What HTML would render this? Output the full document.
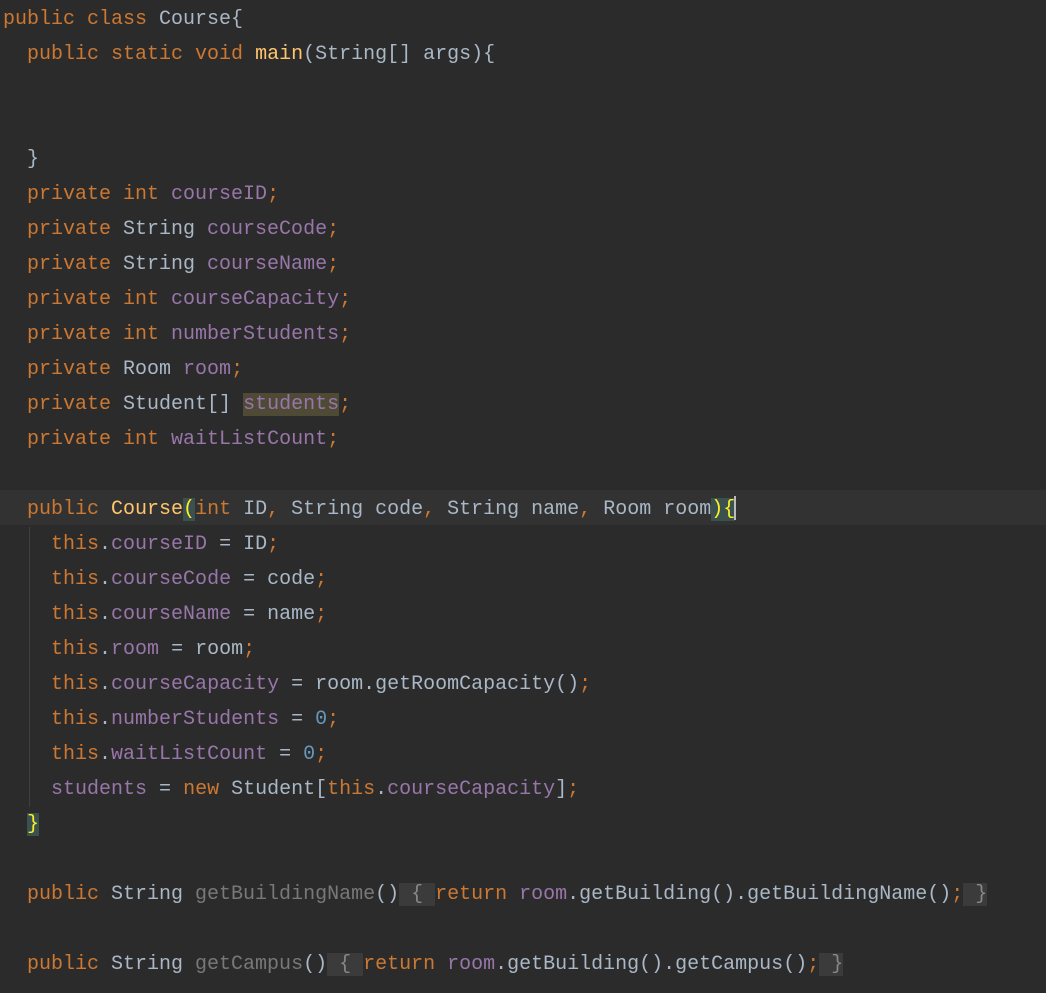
<!DOCTYPE html>
<html><head><style>
html,body{margin:0;padding:0;background:#2b2b2b;}
body{width:1046px;height:993px;overflow:hidden;position:relative;}
.c{position:absolute;left:3px;top:2px;font-family:"Liberation Mono",monospace;font-size:20px;line-height:35px;color:#a9b7c6;white-space:pre;}
.k{color:#cc7832}.f{color:#9876aa}.m{color:#ffc66d}.n{color:#6897bb}.g{color:#787878}
.fold{background:#3b3b3b;color:#888}
.bm{background:#3b514d;color:#ffef28}
.hl{background:#4e4a36}
.cur{position:absolute;left:0;top:490px;width:1046px;height:35px;background:#323232}
.guide{position:absolute;left:29px;top:527px;width:1px;height:280px;background:#3f3f3f}
.caret{position:absolute;left:734px;top:496px;width:2px;height:24px;background:#bbbbbb}
</style></head><body>
<div class="cur"></div>
<div class="guide"></div>
<div class="c"><span class="k">public class </span>Course{
  <span class="k">public static void </span><span class="m">main</span>(String[] args){


  }
  <span class="k">private int </span><span class="f">courseID</span><span class="k">;</span>
  <span class="k">private </span>String <span class="f">courseCode</span><span class="k">;</span>
  <span class="k">private </span>String <span class="f">courseName</span><span class="k">;</span>
  <span class="k">private int </span><span class="f">courseCapacity</span><span class="k">;</span>
  <span class="k">private int </span><span class="f">numberStudents</span><span class="k">;</span>
  <span class="k">private </span>Room <span class="f">room</span><span class="k">;</span>
  <span class="k">private </span>Student[] <span class="f hl">students</span><span class="k">;</span>
  <span class="k">private int </span><span class="f">waitListCount</span><span class="k">;</span>

  <span class="k">public </span><span class="m">Course</span><span class="bm">(</span><span class="k">int </span>ID<span class="k">, </span>String code<span class="k">, </span>String name<span class="k">, </span>Room room<span class="bm">){</span>
    <span class="k">this</span>.<span class="f">courseID </span>= ID<span class="k">;</span>
    <span class="k">this</span>.<span class="f">courseCode </span>= code<span class="k">;</span>
    <span class="k">this</span>.<span class="f">courseName </span>= name<span class="k">;</span>
    <span class="k">this</span>.<span class="f">room </span>= room<span class="k">;</span>
    <span class="k">this</span>.<span class="f">courseCapacity </span>= room.getRoomCapacity()<span class="k">;</span>
    <span class="k">this</span>.<span class="f">numberStudents </span>= <span class="n">0</span><span class="k">;</span>
    <span class="k">this</span>.<span class="f">waitListCount </span>= <span class="n">0</span><span class="k">;</span>
    <span class="f">students </span>= <span class="k">new </span>Student[<span class="k">this</span>.<span class="f">courseCapacity</span>]<span class="k">;</span>
  <span class="bm">}</span>

  <span class="k">public </span>String <span class="g">getBuildingName</span>()<span class="fold"> { </span><span class="k">return </span><span class="f">room</span>.getBuilding().getBuildingName()<span class="k">;</span><span class="fold"> }</span>

  <span class="k">public </span>String <span class="g">getCampus</span>()<span class="fold"> { </span><span class="k">return </span><span class="f">room</span>.getBuilding().getCampus()<span class="k">;</span><span class="fold"> }</span>
</div>
<div class="caret"></div>
</body></html>
